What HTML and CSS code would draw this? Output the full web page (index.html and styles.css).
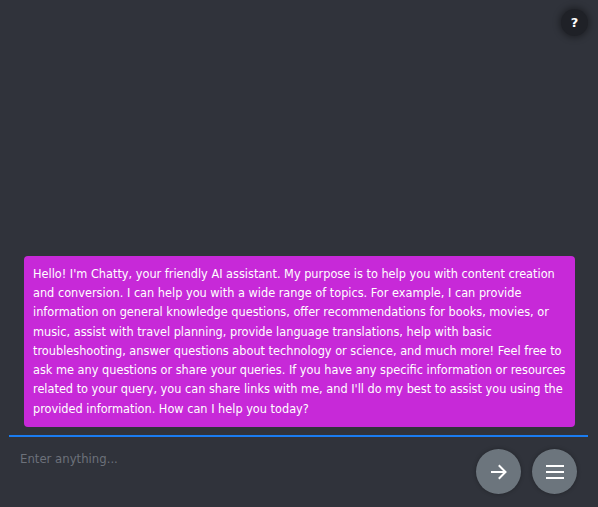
FILE: index.html
```html
<!DOCTYPE html>
<html>
<head>
<meta charset="utf-8">
<link rel="stylesheet" href="styles.css">
</head>
<body>
<div class="app">
  <button class="help">?</button>
  <div class="messages">
    <div class="bubble">Hello! I'm Chatty, your friendly AI assistant. My purpose is to help you with content creation and conversion. I can help you with a wide range of topics. For example, I can provide information on general knowledge questions, offer recommendations for books, movies, or music, assist with travel planning, provide language translations, help with basic troubleshooting, answer questions about technology or science, and much more! Feel free to ask me any questions or share your queries. If you have any specific information or resources related to your query, you can share links with me, and I'll do my best to assist you using the provided information. How can I help you today?</div>
  </div>
  <div class="composer">
    <textarea class="input" placeholder="Enter anything..."></textarea>
    <div class="actions">
      <button class="round">
        <svg width="20" height="20" viewBox="0 0 20 20" fill="none" stroke="#fff" stroke-width="2" stroke-linecap="square"><path d="M3 10h13M10.5 4l6 6-6 6"/></svg>
      </button>
      <button class="round">
        <svg width="20" height="20" viewBox="0 0 20 20" fill="none" stroke="#fff" stroke-width="2"><path d="M1 4h18M1 10h18M1 16h18"/></svg>
      </button>
    </div>
  </div>
</div>
</body>
</html>
```
FILE: styles.css
```css
* { box-sizing: border-box; }
html, body { margin: 0; height: 100%; }
body {
  background: #30333b;
  font-family: "DejaVu Sans Condensed", "DejaVu Sans", sans-serif;
  overflow: hidden;
}
.app {
  position: relative;
  height: 507px;
  display: flex;
  flex-direction: column;
}
.help {
  position: absolute;
  top: 9px;
  right: 10px;
  width: 27px;
  height: 27px;
  border-radius: 50%;
  border: none;
  background: #1f2127;
  color: #fff;
  font-family: "DejaVu Sans", sans-serif;
  font-weight: bold;
  font-size: 13px;
  padding: 0;
  box-shadow: 0 0 6px 2px rgba(0,0,0,0.35);
}
.messages {
  flex: 1;
  display: flex;
  flex-direction: column;
  justify-content: flex-end;
  padding: 0 23px 8px 24px;
}
.bubble {
  background: #c729d8;
  color: #fff;
  border-radius: 4px;
  padding: 8px 8px 9px 9px;
  font-size: 12.6px;
  line-height: 19.3px;
}
.composer {
  margin: 0 10px 0 9px;
  border-top: 2px solid #1a7cf0;
  height: 72px;
  display: flex;
  align-items: flex-start;
}
.input {
  flex: 1;
  background: transparent;
  border: none;
  outline: none;
  resize: none;
  color: #fff;
  font-family: "DejaVu Sans Condensed", "DejaVu Sans", sans-serif;
  font-size: 13px;
  padding: 14px 11px;
  height: 60px;
}
.input::placeholder { color: #6c717a; }
.actions {
  display: flex;
  gap: 11px;
  padding-top: 12px;
  padding-right: 11px;
}
.round {
  width: 45px;
  height: 45px;
  border-radius: 50%;
  border: none;
  background: #6c757d;
  display: flex;
  align-items: center;
  justify-content: center;
  padding: 0;
  box-shadow: 0 0 4px rgba(0,0,0,0.3);
}
```
